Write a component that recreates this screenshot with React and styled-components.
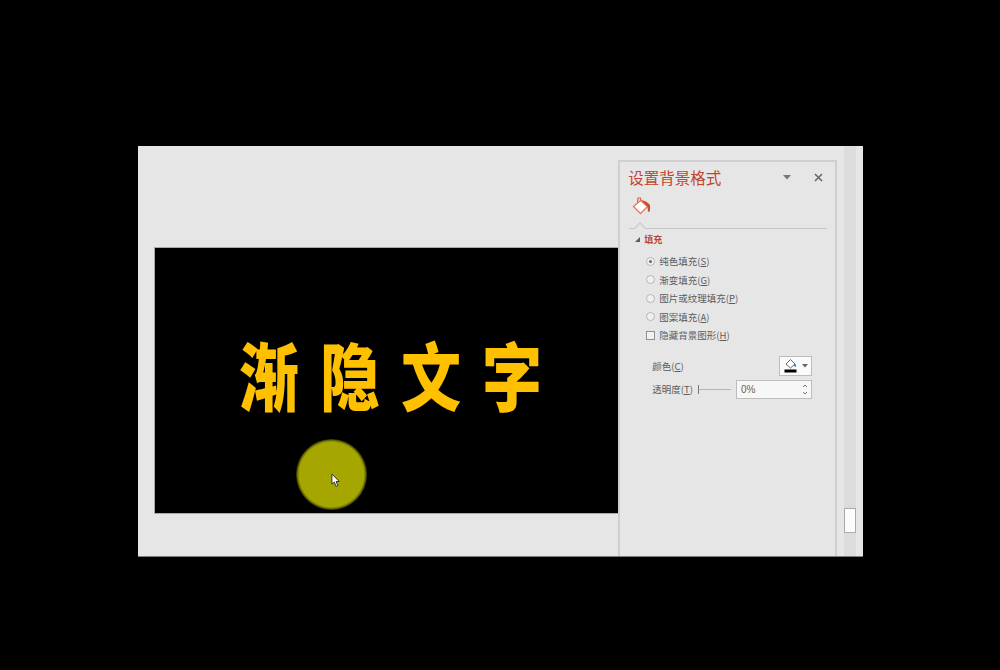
import React from "react";
import styled, { createGlobalStyle } from "styled-components";

const GlobalStyle = createGlobalStyle`
  html, body {
    margin: 0;
    height: 100%;
    background: #000;
    font-family: "Noto Sans CJK SC", "Liberation Sans", sans-serif;
  }
`;

const Page = styled.div`
  width: 1000px;
  height: 670px;
  padding: 146px 137px 113px 138px;
  box-sizing: border-box;
  background: #000;
  overflow: hidden;
`;

const Window = styled.div`
  display: flex;
  height: 411px;
  background: #e6e6e6;
  border-bottom: 1px solid #7d7d7d;
  box-sizing: border-box;
`;

const Canvas = styled.div`
  width: 481px;
  padding-top: 101px;
  padding-left: 16px;
  box-sizing: border-box;
  overflow: hidden;
`;

const Slide = styled.div`
  position: relative;
  width: 500px;
  height: 267px;
  background: #000;
  border: 1px solid #a8a8a8;
  border-right: 0;
  box-sizing: border-box;
  display: flex;
  padding: 87px 0 0 84px;
`;

const Headline = styled.div`
  display: flex;
  gap: 25px;
  height: 76px;
  align-items: flex-start;
`;

const Glyph = styled.span`
  display: block;
  width: 56px;
  height: 76px;
  line-height: 76px;
  text-align: center;
  font-size: 60px;
  font-weight: 900;
  color: #ffc000;
  transform: scaleY(1.235);
`;

const Spotlight = styled.div`
  position: absolute;
  left: 141px;
  top: 191px;
  width: 71px;
  height: 71px;
  border-radius: 50%;
  background: radial-gradient(circle closest-side, #a6a600 91%, #6a6a00 96%, #2e2e00 100%);
`;

const Cursor = styled.svg`
  position: absolute;
  left: 35px;
  top: 34px;
  width: 10px;
  height: 15px;
`;

const Panel = styled.aside`
  width: 219px;
  margin-top: 14px;
  border: 2px solid #cfcfcf;
  border-bottom: 0;
  box-sizing: border-box;
  background: #e6e6e6;
  padding: 3px 8px 0 8px;
  display: flex;
  flex-direction: column;
`;

const PanelHead = styled.div`
  display: flex;
  align-items: center;
  height: 24px;
`;

const PanelTitle = styled.h2`
  margin: 0;
  flex: 1;
  font-size: 15.5px;
  font-weight: 400;
  line-height: 24px;
  color: #c0452c;
`;

const HeadAction = styled.button`
  border: 0;
  padding: 0;
  background: none;
  display: flex;
  align-items: center;
  justify-content: center;
  width: 16px;
  height: 16px;
  margin-left: ${(p) => p.$gap || 0}px;
  margin-right: ${(p) => p.$end || 0}px;
`;

const TabRow = styled.div`
  height: 39px;
  padding: 7px 0 0 4px;
  box-sizing: border-box;
`;

const TabRule = styled.div`
  position: relative;
  height: 1px;
  margin-left: 1px;
  background: #c6c6c6;

  &::after {
    content: "";
    position: absolute;
    left: 7px;
    top: -4px;
    width: 7px;
    height: 7px;
    background: #e6e6e6;
    border-left: 1px solid #c6c6c6;
    border-top: 1px solid #c6c6c6;
    transform: rotate(45deg);
  }
`;

const Section = styled.div`
  display: flex;
  align-items: center;
  gap: 4px;
  height: 20px;
  padding-left: 7px;
  font-size: 9px;
  font-weight: 700;
  color: #b9472f;
`;

const Caret = styled.span`
  width: 0;
  height: 0;
  border-left: 5px solid transparent;
  border-bottom: 5px solid #5a5a5a;
`;

const Options = styled.div`
  display: flex;
  flex-direction: column;
  padding: 3px 0 0 18px;
`;

const Option = styled.div`
  display: flex;
  align-items: center;
  gap: 4px;
  height: 18.5px;
  font-size: 9.5px;
  color: #5c5c5c;
  white-space: nowrap;

  u {
    text-underline-offset: 1px;
  }
`;

const Radio = styled.span`
  position: relative;
  width: 7px;
  height: 7px;
  border-radius: 50%;
  border: 1px solid #b5b5b5;
  background: #f0f0f0;

  ${(p) =>
    p.$checked &&
    `
    &::after {
      content: "";
      position: absolute;
      left: 2px;
      top: 2px;
      width: 3px;
      height: 3px;
      border-radius: 50%;
      background: #666;
    }
  `}
`;

const Check = styled.span`
  width: 7px;
  height: 7px;
  border: 1px solid #8f8f8f;
  background: #f2f2f2;
`;

const FieldRow = styled.div`
  display: flex;
  align-items: center;
  justify-content: space-between;
  padding-left: 24px;
  padding-right: 15px;
  margin-top: ${(p) => p.$top || 0}px;
  font-size: 9.5px;
  color: #5c5c5c;
  white-space: nowrap;

  u {
    text-underline-offset: 1px;
  }
`;

const ColorButton = styled.div`
  display: flex;
  align-items: center;
  justify-content: center;
  gap: 4px;
  width: 33px;
  height: 20px;
  background: #fafafa;
  border: 1px solid #bdbdbd;
  box-sizing: border-box;
`;

const Slider = styled.div`
  display: flex;
  align-items: center;
  flex: 1;
  margin-left: 5px;
  margin-right: 5px;
  height: 9px;
  border-left: 1px solid #777;

  &::after {
    content: "";
    flex: 1;
    height: 1px;
    background: #b5b5b5;
  }
`;

const Spin = styled.div`
  display: flex;
  align-items: center;
  justify-content: space-between;
  width: 76px;
  height: 19px;
  padding: 0 3px 0 4px;
  box-sizing: border-box;
  background: #f7f7f7;
  border: 1px solid #bdbdbd;
  font-family: "Liberation Sans", sans-serif;
  font-size: 10px;
  color: #6b5f55;
`;

const SpinArrows = styled.svg`
  width: 6px;
  height: 13px;
`;

const Gutter = styled.div`
  margin-left: 7px;
  margin-right: 7px;
  width: 12px;
  background: #dcdcdc;
  display: flex;
  flex-direction: column;
  justify-content: flex-end;
  padding-bottom: 23px;
  box-sizing: border-box;
`;

const Thumb = styled.div`
  height: 25px;
  background: #fcfcfc;
  border: 1px solid #ababab;
  box-sizing: border-box;
`;

const FillIcon = () => (
  <svg width="20" height="20" viewBox="0 0 20 20">
    <path d="M5.5 7 L6 2 L8.5 2 L9 6" fill="none" stroke="#d9603f" strokeWidth="1.2" />
    <path d="M8.5 4.5 L15.5 10.5 L8.5 17.5 L1.5 10.5 Z" fill="#fff" stroke="#e07a5c" strokeWidth="1.3" />
    <path d="M9 4 Q15 5 18 9 L18 15 L16 16 L15.5 10.5 Z" fill="#d2492a" />
  </svg>
);

const SmallFillIcon = () => (
  <svg width="14" height="15" viewBox="0 0 14 15">
    <path d="M6.5 1.5 L11 6 L6.5 10 L2 6 Z" fill="#fff" stroke="#666" strokeWidth="1" />
    <path d="M10 5 Q12.5 6 12 9 L10 8 Z" fill="#2e86d6" />
    <rect x="0.5" y="11.5" width="12" height="3" fill="#000" />
  </svg>
);

export default function App() {
  return (
    <>
      <GlobalStyle />
      <Page>
        <Window>
          <Canvas>
            <Slide>
              <Headline>
                <Glyph>渐</Glyph>
                <Glyph>隐</Glyph>
                <Glyph>文</Glyph>
                <Glyph>字</Glyph>
              </Headline>
              <Spotlight>
                <Cursor viewBox="0 0 11 16">
                  <path d="M1 1 L1 12 L3.6 9.8 L5.6 14.5 L7.6 13.6 L5.6 9.2 L9 9 Z" fill="#fff" stroke="#222" strokeWidth="1" />
                </Cursor>
              </Spotlight>
            </Slide>
          </Canvas>
          <Panel>
            <PanelHead>
              <PanelTitle>设置背景格式</PanelTitle>
              <HeadAction>
                <svg width="8" height="5" viewBox="0 0 8 5">
                  <path d="M0 0 H8 L4 4.5 Z" fill="#777" />
                </svg>
              </HeadAction>
              <HeadAction $gap={15} $end={1}>
                <svg width="9" height="9" viewBox="0 0 9 9">
                  <path d="M1 1 L8 8 M8 1 L1 8" stroke="#666" strokeWidth="1.5" />
                </svg>
              </HeadAction>
            </PanelHead>
            <TabRow>
              <FillIcon />
            </TabRow>
            <TabRule />
            <Section>
              <Caret />
              填充
            </Section>
            <Options>
              <Option>
                <Radio $checked />
                <span>纯色填充(<u>S</u>)</span>
              </Option>
              <Option>
                <Radio />
                <span>渐变填充(<u>G</u>)</span>
              </Option>
              <Option>
                <Radio />
                <span>图片或纹理填充(<u>P</u>)</span>
              </Option>
              <Option>
                <Radio />
                <span>图案填充(<u>A</u>)</span>
              </Option>
              <Option>
                <Check />
                <span>隐藏背景图形(<u>H</u>)</span>
              </Option>
            </Options>
            <FieldRow $top={11}>
              <span>颜色(<u>C</u>)</span>
              <ColorButton>
                <SmallFillIcon />
                <svg width="6" height="4" viewBox="0 0 6 4">
                  <path d="M0 0 H6 L3 3.5 Z" fill="#666" />
                </svg>
              </ColorButton>
            </FieldRow>
            <FieldRow $top={4}>
              <span>透明度(<u>T</u>)</span>
              <Slider />
              <Spin>
                0%
                <SpinArrows viewBox="0 0 6 13">
                  <path d="M1 4 L3 2 L5 4 M1 9 L3 11 L5 9" fill="none" stroke="#777" strokeWidth="1" />
                </SpinArrows>
              </Spin>
            </FieldRow>
          </Panel>
          <Gutter>
            <Thumb />
          </Gutter>
        </Window>
      </Page>
    </>
  );
}
